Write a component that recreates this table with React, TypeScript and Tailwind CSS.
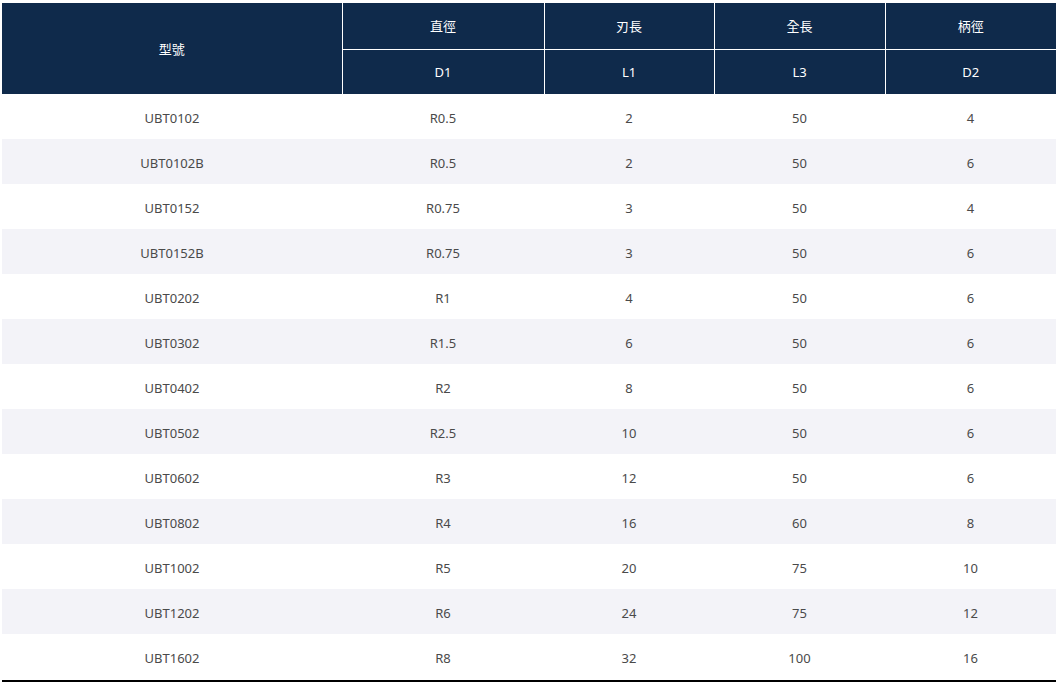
const rows = [
  ["UBT0102", "R0.5", "2", "50", "4"],
  ["UBT0102B", "R0.5", "2", "50", "6"],
  ["UBT0152", "R0.75", "3", "50", "4"],
  ["UBT0152B", "R0.75", "3", "50", "6"],
  ["UBT0202", "R1", "4", "50", "6"],
  ["UBT0302", "R1.5", "6", "50", "6"],
  ["UBT0402", "R2", "8", "50", "6"],
  ["UBT0502", "R2.5", "10", "50", "6"],
  ["UBT0602", "R3", "12", "50", "6"],
  ["UBT0802", "R4", "16", "60", "8"],
  ["UBT1002", "R5", "20", "75", "10"],
  ["UBT1202", "R6", "24", "75", "12"],
  ["UBT1602", "R8", "32", "100", "16"],
];

export default function App() {
  return (
    <div className="w-[1060px] h-[688px] bg-white pl-[2px] pt-[3px] font-['Noto_Sans','Noto_Sans_CJK_TC',sans-serif]">
      <table className="w-[1054px] table-fixed border-collapse text-[13px]">
        <colgroup>
          <col className="w-[340px]" />
          <col className="w-[202px]" />
          <col className="w-[170px]" />
          <col className="w-[171px]" />
          <col className="w-[171px]" />
        </colgroup>
        <thead className="bg-[#0f2a4b] text-white">
          <tr className="h-[46px]">
            <th rowSpan={2} className="font-normal border-r border-white pt-[2px]">型號</th>
            <th className="font-normal border-r border-b border-white pt-[2px]">直徑</th>
            <th className="font-normal border-r border-b border-white pt-[2px]">刃長</th>
            <th className="font-normal border-r border-b border-white pt-[2px]">全長</th>
            <th className="font-normal border-b border-white pt-[2px]">柄徑</th>
          </tr>
          <tr className="h-[45px]">
            <th className="font-normal border-r border-white pt-[2px]">D1</th>
            <th className="font-normal border-r border-white pt-[2px]">L1</th>
            <th className="font-normal border-r border-white pt-[2px]">L3</th>
            <th className="font-normal pt-[2px]">D2</th>
          </tr>
        </thead>
        <tbody className="text-[#4a4a4a]">
          {rows.map((r, i) => (
            <tr key={r[0]} className={i % 2 === 1 ? "h-[45px] bg-[#f3f3f8]" : "h-[45px] bg-white"}>
              {r.map((c, j) => (
                <td key={j} className="text-center align-middle pt-[4px] p-0">
                  {c}
                </td>
              ))}
            </tr>
          ))}
        </tbody>
      </table>
      <div className="w-[1054px] h-[2px] mt-[1px] bg-black" />
    </div>
  );
}
